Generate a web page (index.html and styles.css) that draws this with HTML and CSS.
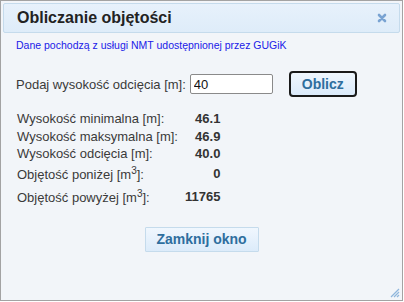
FILE: index.html
```html
<!DOCTYPE html>
<html lang="pl">
  <head>
    <meta charset="UTF-8" />
    <meta name="viewport" content="width=device-width, initial-scale=1.0" />
    <title>Obliczanie objętości</title>
    <link rel="stylesheet" href="styles.css">
  </head>
  <body>
    <div class="dialog">
      <div class="dialog-title">
        <span>Obliczanie objętości</span>
        <svg class="close" width="10" height="10" viewBox="0 0 10 10">
          <path d="M2 2 L8 8 M8 2 L2 8" stroke="#79a3d2" stroke-width="2.6" stroke-linecap="round" />
        </svg>
      </div>
      <div class="dialog-body">
        <p class="source">Dane pochodzą z usługi NMT udostępnionej przez GUGiK</p>
        <form class="cut-form">
          <label for="cut">Podaj wysokość odcięcia [m]:</label>
          <input type="text" id="cut" value="40" />
          <button type="button" class="btn-calc">Oblicz</button>
        </form>
        <table class="results">
          <tr><td>Wysokość minimalna [m]:</td><td class="val">46.1</td></tr>
          <tr><td>Wysokość maksymalna [m]:</td><td class="val">46.9</td></tr>
          <tr><td>Wysokość odcięcia [m]:</td><td class="val">40.0</td></tr>
          <tr><td>Objętość poniżej [m<sup>3</sup>]:</td><td class="val">0</td></tr>
          <tr><td>Objętość powyżej [m<sup>3</sup>]:</td><td class="val">11765</td></tr>
        </table>
        <div class="actions">
          <button type="button" class="btn-close">Zamknij okno</button>
        </div>
      </div>
      <svg class="grip" width="12" height="12" viewBox="0 0 12 12">
        <path d="M11 3 L3 11 M11 6 L6 11 M11 9 L9 11" stroke="#8fb6dc" stroke-width="1.2" />
      </svg>
    </div>
  </body>
</html>
```
FILE: styles.css
```css
*,
*::before,
*::after {
  box-sizing: border-box;
}
* {
  margin: 0;
}
body {
  background-color: #ffffff;
  font-family: "Liberation Sans", Arial, sans-serif;
}

.dialog {
  position: relative;
  width: 403px;
  height: 301px;
  border: 1px solid #a3a3a3;
  background-color: #f2f5f9;
  padding: 2px;
}

.dialog-title {
  display: flex;
  justify-content: space-between;
  align-items: center;
  height: 30px;
  padding: 0 12px 0 13px;
  border: 1px solid #c5dbec;
  border-radius: 2px;
  background: linear-gradient(#e7f1fb, #deecf9);
  font-size: 16px;
  font-weight: bold;
  color: #222222;
}

.close {
  display: block;
}

.dialog-body {
  padding: 6px 13px 0 13px;
}

.source {
  font-size: 10.5px;
  color: #2020e8;
}

.cut-form {
  display: flex;
  align-items: center;
  margin-top: 20px;
  font-size: 13px;
  color: #3a3a3a;
}

.cut-form input {
  width: 83px;
  height: 20px;
  margin-left: 4px;
  padding: 0 3px;
  border: 1px solid #8a8a8a;
  border-radius: 2px;
  font-family: "Liberation Sans", Arial, sans-serif;
  font-size: 13px;
  color: #111111;
  background-color: #ffffff;
}

.btn-calc {
  width: 68px;
  height: 26px;
  margin-left: 16px;
  border: 2px solid #1a1a1a;
  border-radius: 4px;
  background: linear-gradient(#eff6fd, #dbeafa);
  font-family: "Liberation Sans", Arial, sans-serif;
  font-size: 14px;
  font-weight: bold;
  color: #2e6e9e;
}

.results {
  margin-top: 13px;
  margin-left: 1px;
  border-spacing: 0;
  font-size: 13px;
  color: #3a3a3a;
}

.results td {
  padding: 1px 0;
}

.results tr:nth-child(2) td {
  padding-top: 2px;
}

.results tr:nth-child(4) td {
  padding-top: 3px;
}

.results tr:nth-child(5) td {
  padding-top: 5px;
}

.results sup {
  font-size: 10px;
}

.results .val {
  padding-left: 7px;
  text-align: right;
  font-weight: bold;
  color: #333333;
}

.actions {
  display: flex;
  justify-content: center;
  margin-top: 20px;
}

.btn-close {
  width: 114px;
  height: 25px;
  border: 1px solid #c5dbec;
  border-radius: 1px;
  background: linear-gradient(#f0f7fe, #dcebfa);
  font-family: "Liberation Sans", Arial, sans-serif;
  font-size: 14px;
  font-weight: bold;
  color: #2e6e9e;
}

.grip {
  position: absolute;
  right: 2px;
  bottom: 2px;
}
```
